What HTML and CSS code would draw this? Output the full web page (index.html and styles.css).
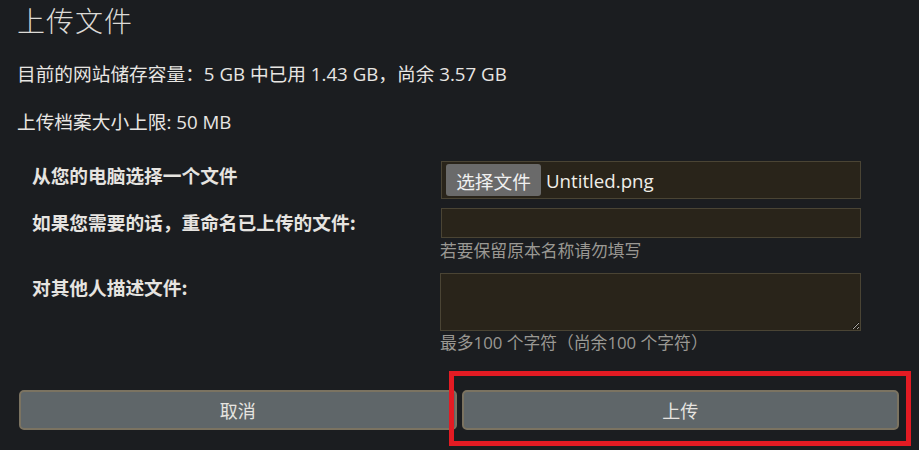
FILE: index.html
```html
<!DOCTYPE html>
<html lang="zh-CN">
<head>
<meta charset="utf-8">
<title>上传文件</title>
<link rel="stylesheet" href="styles.css">
</head>
<body>
<div class="page">
  <h1 class="title">上传文件</h1>
  <p class="info">目前的网站储存容量：5 GB 中已用 1.43 GB，尚余 3.57 GB</p>
  <p class="info">上传档案大小上限: 50 MB</p>

  <div class="form">
    <div class="label">从您的电脑选择一个文件</div>
    <div class="field">
      <div class="file"><span class="file-btn">选择文件</span><span class="file-name">Untitled.png</span></div>
    </div>

    <div class="label">如果您需要的话，重命名已上传的文件:</div>
    <div class="field">
      <input class="text-input" type="text">
      <div class="hint">若要保留原本名称请勿填写</div>
    </div>

    <div class="label">对其他人描述文件:</div>
    <div class="field">
      <textarea class="textarea"></textarea>
      <div class="hint hint-tight">最多100 个字符（尚余100 个字符）</div>
    </div>
  </div>

  <div class="actions">
    <button class="btn" type="button">取消</button>
    <button class="btn" type="button">上传</button>
  </div>

  <div class="highlight"></div>
</div>
</body>
</html>
```

FILE: styles.css
```css
html, body {
  margin: 0;
  padding: 0;
  background: #1b1d20;
}

body {
  font-family: "Open Sans", "Noto Sans CJK SC", sans-serif;
  color: #e8e6e3;
  width: 919px;
  height: 450px;
  overflow: hidden;
}

.page {
  position: relative;
  padding: 2px 17px 0 17px;
}

.title {
  margin: 0 0 24px 0;
  font-family: "Noto Sans CJK SC", serif;
  font-weight: 300;
  font-size: 28px;
  line-height: 36px;
  color: #dcdad6;
  letter-spacing: 1px;
}

.info {
  margin: 0 0 24px 0;
  font-size: 18.7px;
  line-height: 24px;
  color: #e8e6e3;
}

.form {
  display: grid;
  grid-template-columns: 408px 421px;
  row-gap: 9px;
  margin: 27px 0 0 15px;
}

.label {
  padding-top: 2px;
  font-family: "Noto Sans CJK SC", sans-serif;
  font-weight: 700;
  font-size: 18.7px;
  line-height: 24px;
  color: #e6e4e0;
}

.field {
  display: flex;
  flex-direction: column;
}

.file {
  box-sizing: border-box;
  height: 38px;
  display: flex;
  align-items: center;
  padding: 0 3px 0 4px;
  background: #29241a;
  border: 1px solid #4a4434;
  margin-left: 1px;
}

.file-btn {
  display: inline-flex;
  align-items: center;
  justify-content: center;
  width: 95px;
  height: 32px;
  box-sizing: border-box;
  background: #6a6a6a;
  border-radius: 3px;
  font-family: "Noto Sans CJK SC", sans-serif;
  font-size: 18.7px;
  color: #f0f0f0;
}

.file-name {
  margin-left: 5px;
  font-size: 18.7px;
  color: #f0eee9;
}

.text-input {
  box-sizing: border-box;
  height: 30px;
  margin: 0 0 0 1px;
  padding: 0 6px;
  background: #29241a;
  border: 1px solid #4a4434;
  border-radius: 0;
  color: #e8e6e3;
  font: inherit;
  outline: none;
}

.textarea {
  box-sizing: border-box;
  height: 58px;
  width: 421px;
  margin: 0;
  padding: 4px 6px;
  background: #29241a;
  border: 1px solid #4a4434;
  border-radius: 0;
  color: #e8e6e3;
  font: inherit;
  resize: vertical;
  outline: none;
  display: block;
}

.hint {
  margin-top: 2px;
  margin-bottom: 2px;
  font-size: 16.8px;
  line-height: 22px;
  color: #9a9893;
}

.hint-tight {
  margin-top: 1px;
}

.actions {
  display: flex;
  gap: 5px;
  margin: 34px 3px 0 2px;
}

.btn {
  flex: 1;
  height: 40px;
  box-sizing: border-box;
  background: #5f6669;
  border: 2px solid #7b7361;
  border-radius: 5px;
  color: #e6e4e0;
  font-family: "Noto Sans CJK SC", sans-serif;
  font-size: 18px;
  font-weight: 400;
  padding: 0;
}

.highlight {
  position: absolute;
  left: 449px;
  top: 371px;
  width: 462px;
  height: 75px;
  box-sizing: border-box;
  border: 5px solid #e31b23;
  pointer-events: none;
}
```
